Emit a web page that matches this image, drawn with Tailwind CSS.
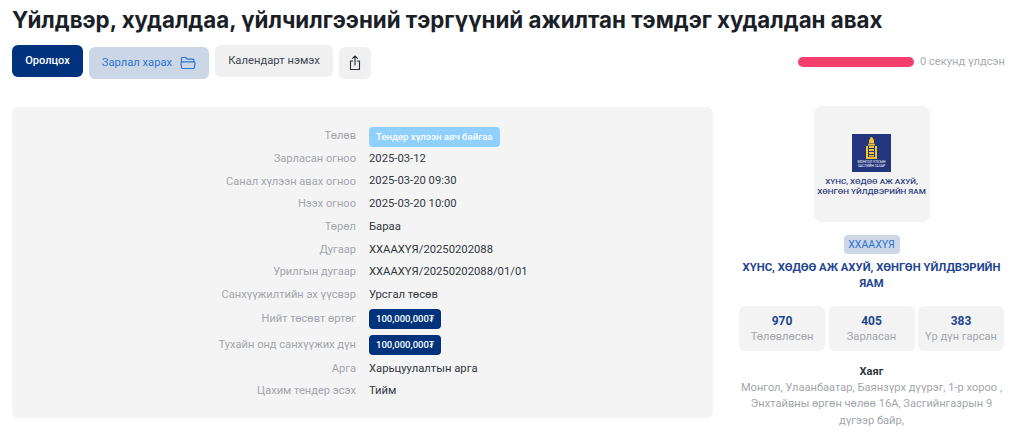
<!DOCTYPE html>
<html lang="mn">
<head>
<meta charset="UTF-8">
<title>Тендер</title>
<script src="https://cdn.jsdelivr.net/npm/@tailwindcss/browser@4"></script>
</head>
<body class="bg-white overflow-hidden h-[433px] font-['Roboto','Noto_Sans',sans-serif]">
<div class="px-3 pt-2">
  <h1 class="font-['Inter','Roboto',sans-serif] text-[22.3px] leading-[24px] font-bold text-[#1a2027] whitespace-nowrap">Үйлдвэр, худалдаа, үйлчилгээний тэргүүний ажилтан тэмдэг худалдан авах</h1>

  <!-- товчнууд -->
  <div class="flex items-start mt-[13px] h-[33px]">
    <button class="w-[71px] h-[32px] bg-[#00337c] rounded-md text-white text-[11px] font-medium">Оролцох</button>
    <button class="ml-[6px] mt-[2px] w-[120px] h-[32px] bg-[#cbd6e6] rounded-md text-[#2f74d0] text-[11.2px] flex items-center justify-center gap-2">
      Зарлал харах
      <svg class="w-[16px] h-[14px]" viewBox="0 0 16 14" fill="none" stroke="#2f74d0" stroke-width="1.2" stroke-linejoin="round"><path d="M1.500 6V2.500a1 1 0 0 1 1-1h3.200l1.500 1.700h5.600a1 1 0 0 1 1 1V6"/><path d="M1 7a1.200 1.200 0 0 1 1.200-1.200h11.600A1.200 1.200 0 0 1 15 7l-.6 4.600a1 1 0 0 1-1 .9H2.600a1 1 0 0 1-1-.9z"/></svg>
    </button>
    <button class="ml-[6px] w-[118px] h-[32px] bg-[#f0f0f1] rounded-md text-[#3f4650] text-[11.25px]">Календарт нэмэх</button>
    <button class="ml-[6px] mt-[2px] w-[32px] h-[32px] bg-[#f0f0f1] rounded-md flex items-center justify-center">
      <svg class="w-[12px] h-[16px]" viewBox="0 0 12 16" fill="none" stroke="#2b3038" stroke-width="1.1" stroke-linecap="round" stroke-linejoin="round"><path d="M6 10V1M3.600 3.300 6 1l2.400 2.300"/><path d="M3.800 6H1.500v8.500h9V6H8.200"/></svg>
    </button>
    <div class="ml-auto flex items-center gap-[6px] mt-[1px] h-[32px] pr-[7px]">
      <div class="w-[116px] h-[10px] rounded-full bg-[#f43f6e]"></div>
      <span class="text-[11.2px] text-[#a8abb0]">0 секунд үлдсэн</span>
    </div>
  </div>

  <div class="flex items-start mt-[29px]">
    <!-- мэдээлэл -->
    <div class="w-[701px] h-[311px] bg-[#f4f4f5] rounded-md pt-[18.200px] text-[11.1px]">
      <div class="grid grid-cols-[344px_1fr] gap-x-[13px] items-center grid-rows-[repeat(7,22.7px)_22px_26px_26px_22px_22px]">
        <span class="text-right text-[#a3a6ab]">Төлөв</span>
        <span><span class="inline-block h-[20px] leading-[20px] px-[7px] rounded bg-[#8fd0ff] text-white text-[9.6px] font-medium">Тендер хүлээн авч байгаа</span></span>
        <span class="text-right text-[#a3a6ab]">Зарласан огноо</span>
        <span class="text-[#33383f] text-[11.25px]">2025-03-12</span>
        <span class="text-right text-[#a3a6ab]">Санал хүлээн авах огноо</span>
        <span class="text-[#33383f] text-[11.25px]">2025-03-20 09:30</span>
        <span class="text-right text-[#a3a6ab]">Нээх огноо</span>
        <span class="text-[#33383f] text-[11.25px]">2025-03-20 10:00</span>
        <span class="text-right text-[#a3a6ab]">Төрөл</span>
        <span class="text-[#33383f] text-[11.25px]">Бараа</span>
        <span class="text-right text-[#a3a6ab]">Дугаар</span>
        <span class="text-[#33383f] text-[11.25px]">ХХААХҮЯ/20250202088</span>
        <span class="text-right text-[#a3a6ab]">Урилгын дугаар</span>
        <span class="text-[#33383f] text-[11.25px]">ХХААХҮЯ/20250202088/01/01</span>
        <span class="text-right text-[#a3a6ab]">Санхүүжилтийн эх үүсвэр</span>
        <span class="text-[#33383f] text-[11.25px]">Урсгал төсөв</span>
        <span class="text-right text-[#a3a6ab]">Нийт төсөвт өртөг</span>
        <span class="flex"><span class="h-[20px] leading-[20px] px-[7px] rounded bg-[#00337c] text-white text-[9.5px] font-medium">100,000,000₮</span></span>
        <span class="text-right text-[#a3a6ab]">Тухайн онд санхүүжих дүн</span>
        <span class="flex"><span class="h-[20px] leading-[20px] px-[7px] rounded bg-[#00337c] text-white text-[9.5px] font-medium">100,000,000₮</span></span>
        <span class="text-right text-[#a3a6ab]">Арга</span>
        <span class="text-[#33383f] text-[11.25px]">Харьцуулалтын арга</span>
        <span class="text-right text-[#a3a6ab]">Цахим тендер эсэх</span>
        <span class="text-[#33383f] text-[11.25px]">Тийм</span>
      </div>
    </div>

    <!-- захиалагч -->
    <div class="ml-[26px] w-[265px] -mt-[1px] flex flex-col items-center">
      <div class="w-[116px] h-[116px] bg-[#f3f3f4] rounded-lg flex flex-col items-center pt-[28px]">
        <div class="w-[39px] h-[38px] bg-[#22357d] flex flex-col items-center pt-[3px]">
          <svg class="w-[13px] h-[22px]" viewBox="0 0 13 22" fill="#f2c230"><circle cx="6.500" cy="1.500" r="1.500"/><path d="M4 4a2.500 2.500 0 0 1 5 0v2H4z"/><path d="M3.500 6.500h6l.5 2h-7z"/><path d="M1 9h2v11h7V9h2v13H1z"/><path d="M4 9h5v2H4zM4 12h5v2H4zM4 15h5v2H4zM4 18h5v1.500H4z"/></svg>
          <span class="text-[3.500px] leading-[4px] text-white text-center whitespace-nowrap mt-[1px]">МОНГОЛ УЛСЫН<br>ЗАСГИЙН ГАЗАР</span>
        </div>
        <div class="mt-[5px] text-[8.1px] leading-[9.500px] font-medium text-[#2d3c80] text-center whitespace-nowrap">ХҮНС, ХӨДӨӨ АЖ АХУЙ,<br>ХӨНГӨН ҮЙЛДВЭРИЙН ЯАМ</div>
      </div>
      <span class="mt-[13px] h-[19px] leading-[19px] w-[56px] text-center rounded bg-[#cbd6e6] text-[#2f74d0] text-[10.500px]">ХХААХҮЯ</span>
      <div class="mt-[6px] w-[265px] text-center text-[11.3px] leading-[16px] font-bold text-[#1f4690]">ХҮНС, ХӨДӨӨ АЖ АХУЙ, ХӨНГӨН ҮЙЛДВЭРИЙН ЯАМ</div>
      <div class="mt-[14px] w-full grid grid-cols-3 gap-[3.500px]">
        <div class="h-[45px] bg-[#f3f3f4] rounded-md flex flex-col items-center justify-center">
          <span class="text-[12px] leading-[16px] font-bold text-[#1f4690]">970</span>
          <span class="text-[11.1px] leading-[16px] text-[#a3a6ab]">Төлөвлөсөн</span>
        </div>
        <div class="h-[45px] bg-[#f3f3f4] rounded-md flex flex-col items-center justify-center">
          <span class="text-[12px] leading-[16px] font-bold text-[#1f4690]">405</span>
          <span class="text-[11.1px] leading-[16px] text-[#a3a6ab]">Зарласан</span>
        </div>
        <div class="h-[45px] bg-[#f3f3f4] rounded-md flex flex-col items-center justify-center">
          <span class="text-[12px] leading-[16px] font-bold text-[#1f4690]">383</span>
          <span class="text-[11.1px] leading-[16px] text-[#a3a6ab]">Үр дүн гарсан</span>
        </div>
      </div>
      <div class="mt-[13px] text-[11.1px] leading-[16px] font-bold text-[#33383f]">Хаяг</div>
      <div class="w-[270px] text-center text-[11.1px] leading-[16.300px] text-[#a3a6ab]">Монгол, Улаанбаатар, Баянзүрх дүүрэг, 1-р хороо , Энхтайвны өргөн чөлөө 16А, Засгийнгазрын 9 дүгээр байр,</div>
    </div>
  </div>
</div>
</body>
</html>
